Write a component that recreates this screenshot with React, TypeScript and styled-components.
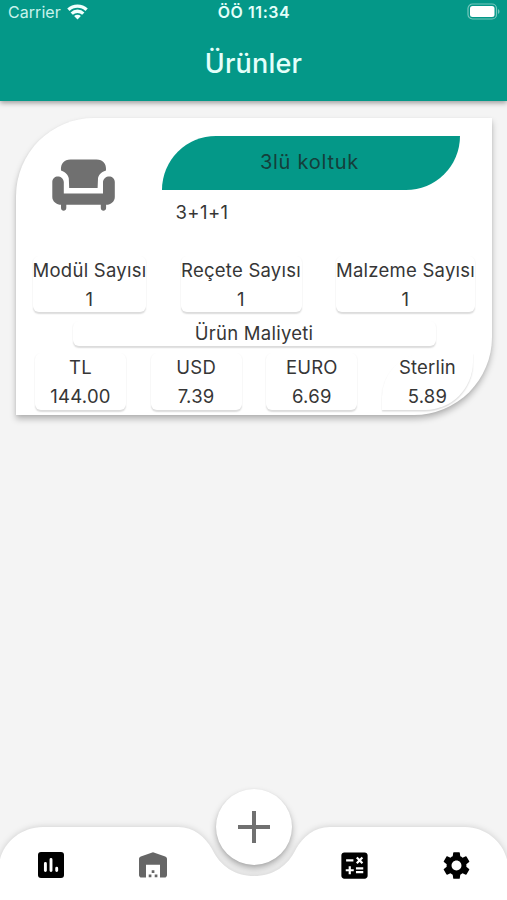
import React from "react";
import styled, { createGlobalStyle } from "styled-components";
import { MdCalculate, MdSettings } from "react-icons/md";

const GlobalStyle = createGlobalStyle`
  * { box-sizing: border-box; }
  body { margin: 0; background: #f4f4f4; font-family: Inter, "Liberation Sans", sans-serif; }
`;

const Screen = styled.div`
  width: 507px;
  height: 900px;
  display: flex;
  flex-direction: column;
  background: #f4f4f4;
  color: #363636;
  overflow: hidden;
`;

const Header = styled.header`
  height: 101px;
  flex: none;
  background: #049888;
  color: #e4fffa;
  box-shadow: 0 2px 5px rgba(0, 0, 0, 0.36);
`;

const StatusBar = styled.div`
  height: 24px;
  padding: 0 7px 0 8px;
  display: grid;
  grid-template-columns: 1fr auto 1fr;
  align-items: center;
  font-size: 16px;
  line-height: 24px;
`;

const Carrier = styled.div`
  display: flex;
  align-items: center;
  gap: 6px;
  letter-spacing: 0.05px;
  color: #c9f3ec;
`;

const Clock = styled.div`
  font-weight: 600;
  letter-spacing: 0.55px;
`;

const BatterySlot = styled.div`
  display: flex;
  justify-content: flex-end;
  padding-bottom: 1px;
`;

const Title = styled.h1`
  margin: 20px 0 0;
  font-size: 27px;
  font-weight: 500;
  line-height: 39px;
  letter-spacing: 0.2px;
  text-align: center;
`;

const Content = styled.main`
  flex: 1;
  padding: 16.5px 15px 0 16px;
`;

const ProductCard = styled.article`
  height: 297px;
  padding: 18px 17px 0;
  display: flex;
  flex-direction: column;
  background: #fff;
  border-radius: 78px 0 78px 0;
  box-shadow: 0 4px 6px rgba(0, 0, 0, 0.25), 0 1px 3px rgba(0, 0, 0, 0.06);
  font-size: 18.5px;
  letter-spacing: 0.25px;
  line-height: 29px;
`;

const ProductHead = styled.div`
  height: 120px;
  display: grid;
  grid-template-columns: 129px 298px;
`;

const ProductIcon = styled.div`
  padding: 23.5px 0 0 19px;
`;

const NameBanner = styled.div`
  height: 54.5px;
  display: flex;
  align-items: center;
  justify-content: center;
  padding-right: 3px;
  background: #049888;
  border-radius: 54px 0 54px 0;
  color: #143f3b;
  font-size: 20px;
  letter-spacing: 0.75px;
`;

const Description = styled.div`
  padding: 8px 0 0 13.500px;
  letter-spacing: 0.400px;
`;

const CountRow = styled.div`
  height: 56.500px;
  display: flex;
  justify-content: space-between;
`;

const Tile = styled.div<{ $width: number; $leaf?: boolean }>`
  width: ${(p) => p.$width}px;
  display: flex;
  flex-direction: column;
  align-items: center;
  white-space: nowrap;
  background: #fff;
  border-radius: ${(p) => (p.$leaf ? "44px 0 48px 0" : "6px")};
  box-shadow: 0 1.5px 1.5px rgba(0, 0, 0, 0.14);
`;

const CostTitle = styled.div`
  width: 363px;
  height: 25px;
  margin: 9px 0 0 39.500px;
  text-align: center;
  line-height: 25px;
  border-radius: 6px;
  box-shadow: 0 1.5px 1.5px rgba(0, 0, 0, 0.14);
`;

const CostRow = styled.div`
  height: 57px;
  margin: 7px 2px 0;
  display: flex;
  justify-content: space-between;
`;

const TileLabel = styled.span<{ $spacing?: number }>`
  height: 29px;
  letter-spacing: ${(p) => p.$spacing ?? 0.25}px;
`;

const TileValue = styled.span`
  height: 28px;
  line-height: 29px;
  letter-spacing: 0.25px;
`;

const BottomBar = styled.nav`
  position: relative;
  height: 112px;
  flex: none;
  display: grid;
  grid-template-columns: 101px 103px 99px 103px 101px;
  padding-top: 40px;
`;

const BarShape = styled.svg`
  position: absolute;
  inset: 0;
  filter: drop-shadow(0 0 3px rgba(0, 0, 0, 0.16));
`;

const NavButton = styled.button`
  position: relative;
  height: 74px;
  padding: 0;
  border: 0;
  background: none;
  display: flex;
  align-items: center;
  justify-content: center;
  color: #000;
`;

const AddButton = styled.button`
  position: absolute;
  left: 215.5px;
  top: 0.5px;
  width: 76.5px;
  height: 76.5px;
  padding: 0;
  border: 0;
  border-radius: 50%;
  background: #fff;
  display: grid;
  place-items: center;
  box-shadow: 0 4px 7px rgba(0, 0, 0, 0.28), 0 1px 3px rgba(0, 0, 0, 0.07);
`;

const WifiIcon = () => (
  <svg width="21" height="16" viewBox="0 0 21 16" fill="none" stroke="#f0fffc" strokeWidth="3.3">
    <path d="M1.4 5.8a13 13 0 0 1 18.2 0" />
    <path d="M4.700 9.600a8.300 8.300 0 0 1 11.600 0" />
    <path d="M10.5 15.4 7.1 12.100a4.900 4.900 0 0 1 6.800 0Z" fill="#f0fffc" stroke="none" />
  </svg>
);

const BatteryIcon = () => (
  <svg width="33" height="17" viewBox="0 0 33 17">
    <rect x="1" y="1" width="28.5" height="15" rx="4.5" fill="none" stroke="#76c7bd" strokeWidth="1.2" />
    <rect x="3" y="3" width="24.5" height="11" rx="2.5" fill="#fff" />
    <path d="M31 6c2 1 2 4 0 5Z" fill="#76c7bd" />
  </svg>
);

const ArmchairIcon = () => (
  <svg width="64" height="52" viewBox="0 0 64 52" fill="#707070">
    <path d="M9 11.5C8.5 4.5 12 .5 18.5.5h26C51 .5 54.500 4.500 54 11.500c-5.500 1.500-7.500 5-8 8l-.4 9.500H17.200l-.4-9.500c-.5-3-2.800-6.500-7.800-8Z" />
    <path d="M.3 23c0-7.500 11-7.500 11.500 0v11.500H51V23c.5-7.500 11.800-7.500 11.800 0v15c0 4.500-4 7.800-8.500 7.800H9.500C4.500 45.800.3 42.500.3 38Z" />
    <path d="M9 44h5.300v5c0 3.500-5.300 3.500-5.300 0ZM48.800 44h5.300v5c0 3.500-5.300 3.500-5.300 0Z" />
  </svg>
);

const ChartIcon = () => (
  <svg width="26" height="26" viewBox="0 0 26 26">
    <rect width="26" height="26" rx="3" fill="#000" />
    <path d="M7.400 11.500v7M13 7.500v11M18.700 16.200v2.300" stroke="#fff" strokeWidth="2.900" strokeLinecap="round" />
  </svg>
);

const WarehouseIcon = () => (
  <svg width="30" height="26" viewBox="0 0 30 26" fill="#666">
    <path d="M15 .2 27.200 4.600c1.200.5 1.800 1.300 1.800 2.500V23c0 1.500-1 2.600-2.500 2.600H22V12.800H8v12.800H3.500C2 25.600 1 24.500 1 23V7.100c0-1.200.6-2 1.800-2.500Z" />
    <path d="M13.700 18.300h2.700V21h-2.700ZM10.700 22.500h2.700v2.700h-2.700ZM16.700 22.500h2.700v2.700h-2.700Z" />
  </svg>
);

const counts = [
  { label: "Modül Sayısı", value: "1", width: 113 },
  { label: "Reçete Sayısı", value: "1", width: 121 },
  { label: "Malzeme Sayısı", value: "1", width: 139 },
];

const costs = [
  { label: "TL", value: "144.00" },
  { label: "USD", value: "7.39" },
  { label: "EURO", value: "6.69" },
  { label: "Sterlin", value: "5.89" },
];

export default function App() {
  return (
    <Screen>
      <GlobalStyle />
      <Header>
        <StatusBar>
          <Carrier>
            Carrier
            <WifiIcon />
          </Carrier>
          <Clock>ÖÖ 11:34</Clock>
          <BatterySlot>
            <BatteryIcon />
          </BatterySlot>
        </StatusBar>
        <Title>Ürünler</Title>
      </Header>
      <Content>
        <ProductCard>
          <ProductHead>
            <ProductIcon>
              <ArmchairIcon />
            </ProductIcon>
            <div>
              <NameBanner>3lü koltuk</NameBanner>
              <Description>3+1+1</Description>
            </div>
          </ProductHead>
          <CountRow>
            {counts.map((c) => (
              <Tile key={c.label} $width={c.width}>
                <TileLabel>{c.label}</TileLabel>
                <TileValue>{c.value}</TileValue>
              </Tile>
            ))}
          </CountRow>
          <CostTitle>Ürün Maliyeti</CostTitle>
          <CostRow>
            {costs.map((c, i) => (
              <Tile key={c.label} $width={91} $leaf={i === costs.length - 1}>
                <TileLabel $spacing={0.2}>{c.label}</TileLabel>
                <TileValue>{c.value}</TileValue>
              </Tile>
            ))}
          </CostRow>
        </ProductCard>
      </Content>
      <BottomBar>
        <BarShape width="507" height="112" viewBox="0 0 507 112">
          <path
            fill="#fff"
            d="M-1 112V80C-1 58 19 39 43 39H178C194 39 205 49 212 61C220 78 235 88 254 88C273 88 288 78 296 61C303 49 314 39 330 39H465C488 39 508 58 508 80V112Z"
          />
        </BarShape>
        <NavButton aria-label="Raporlar">
          <ChartIcon />
        </NavButton>
        <NavButton aria-label="Depo">
          <WarehouseIcon />
        </NavButton>
        <span />
        <NavButton aria-label="Hesapla">
          <MdCalculate size={35} />
        </NavButton>
        <NavButton aria-label="Ayarlar">
          <MdSettings size={33} />
        </NavButton>
        <AddButton aria-label="Ekle">
          <svg width="32" height="32" viewBox="0 0 32 32">
            <path d="M16 0v32M0 16h32" stroke="#707070" strokeWidth="4" />
          </svg>
        </AddButton>
      </BottomBar>
    </Screen>
  );
}
